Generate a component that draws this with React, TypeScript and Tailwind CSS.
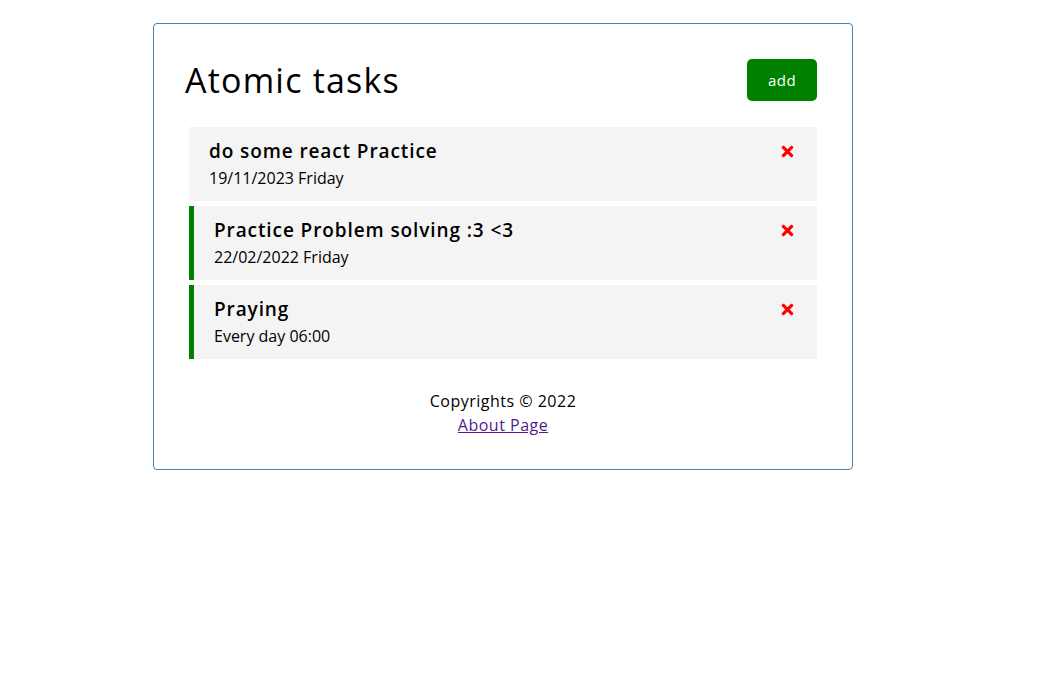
import React from "react";
import { FaTimes } from "react-icons/fa";

interface Task {
	id: number;
	text: string;
	day: string;
	reminder: boolean;
}

const tasks: Task[] = [
	{ id: 1, text: "do some react Practice", day: "19/11/2023 Friday", reminder: false },
	{ id: 2, text: "Practice Problem solving :3 <3", day: "22/02/2022 Friday", reminder: true },
	{ id: 3, text: "Praying", day: "Every day 06:00", reminder: true },
];

const TaskItem = ({ task }: { task: Task }) => {
	return (
		<div
			className={
				task.reminder
					? "bg-[#f4f4f4] pt-[10px] pb-[10px] pl-[20px] pr-[20px] border-l-[5px] border-[#008000]"
					: "bg-[#f4f4f4] pt-[10px] pb-[10px] pl-[20px] pr-[20px]"
			}
		>
			<h3 className="flex items-center justify-between text-[19px] leading-[28px] font-semibold tracking-[0.9px]">
				{task.text}
				<FaTimes className="text-[#ff0000] mr-[1px]" size={17} />
			</h3>
			<p className="text-[16px] leading-[26px]">{task.day}</p>
		</div>
	);
};

const App = () => {
	return (
		<div className="bg-white min-h-[693px] pt-[23px]" style={{ fontFamily: "'Open Sans', sans-serif" }}>
			<div className="w-[700px] ml-[153px] border border-[#4682b4] rounded-[4px] px-[35px] pt-[35px] pb-[31px] text-black">
				<header className="flex items-center justify-between mb-[26px]">
					<h1 className="text-[34px] leading-[42px] font-medium tracking-[1.2px] -ml-[4px]">Atomic tasks</h1>
					<button className="bg-[#008000] text-white rounded-[5px] w-[70px] h-[42px] text-[15px] tracking-[0.5px]">
						add
					</button>
				</header>
				<div className="flex flex-col gap-[5px]">
					{tasks.map((task) => (
						<TaskItem key={task.id} task={task} />
					))}
				</div>
				<footer className="mt-[30px] text-center text-[16px] tracking-[0.5px]">
					<p className="leading-[24px]">Copyrights © 2022</p>
					<a href="#" className="underline text-[#551a8b] leading-[25px]">
						About Page
					</a>
				</footer>
			</div>
		</div>
	);
};

export default App;
